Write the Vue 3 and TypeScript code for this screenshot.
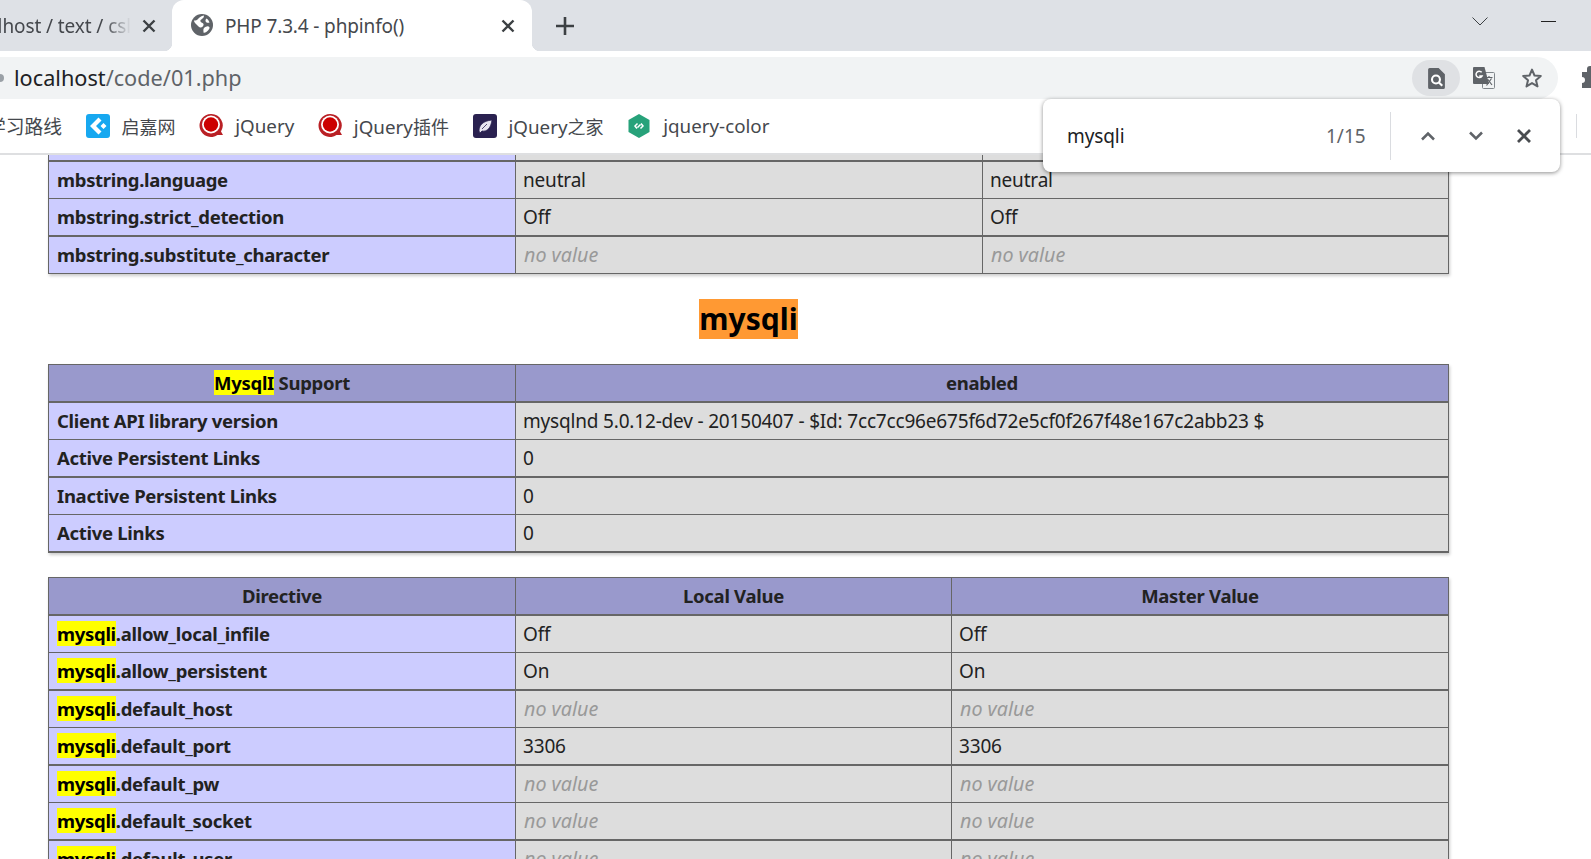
<script setup lang="ts">
interface Row {
  name: string
  mark?: string
  v1: string
  v2?: string
  thick?: boolean
}

const t1: Row[] = [
  { name: 'mbstring.language', v1: 'neutral', v2: 'neutral' },
  { name: 'mbstring.strict_detection', v1: 'Off', v2: 'Off', thick: true },
  { name: 'mbstring.substitute_character', v1: 'no value', v2: 'no value' }
]
const t2: Row[] = [
  { name: 'Client API library version', v1: 'mysqlnd 5.0.12-dev - 20150407 - $Id: 7cc7cc96e675f6d72e5cf0f267f48e167c2abb23 $' },
  { name: 'Active Persistent Links', v1: '0', thick: true },
  { name: 'Inactive Persistent Links', v1: '0' },
  { name: 'Active Links', v1: '0', thick: true }
]
const t3: Row[] = [
  { mark: 'mysqli', name: '.allow_local_infile', v1: 'Off', v2: 'Off' },
  { mark: 'mysqli', name: '.allow_persistent', v1: 'On', v2: 'On', thick: true },
  { mark: 'mysqli', name: '.default_host', v1: 'no value', v2: 'no value' },
  { mark: 'mysqli', name: '.default_port', v1: '3306', v2: '3306', thick: true },
  { mark: 'mysqli', name: '.default_pw', v1: 'no value', v2: 'no value' },
  { mark: 'mysqli', name: '.default_socket', v1: 'no value', v2: 'no value', thick: true },
  { mark: 'mysqli', name: '.default_user', v1: 'no value', v2: 'no value' }
]
</script>

<template>
  <div class="window">
    <div class="tabstrip">
      <div class="tab-inactive">
        <div class="tab-title-clip"><span>localhost / text / csl</span></div>
        <svg class="x" viewBox="0 0 16 16" width="16" height="16"><path d="M2.5 2.5l11 11M13.5 2.5l-11 11" /></svg>
      </div>
      <div class="tab-active">
        <svg class="globe" viewBox="0 0 22 22" width="22" height="22">
          <circle cx="11" cy="11" r="11" fill="#5f6368" />
          <path d="M3 6.5c2 0 3-.5 4-1.5s3-3 6-3.500c0 2-1 2.500-2 3.500S9 6 9.500 7.500s2.500 1 3 2.500-1 3-2.500 3.500S7 12 5.500 10.500 3 8 3 6.500zM13 14c1.500-1 3-2 4.500-1.500s1.500 2-.5 4-3.500 2.500-4.500 2c0-1.500-.5-3.500.5-4.500zM15.500 4.500c1.500 1 2.500 2.500 3 4-1 .5-2.500.5-3.500-.5s-.5-2.500.5-3.500z" fill="#fff" />
        </svg>
        <span class="tab-title">PHP 7.3.4 - phpinfo()</span>
        <svg class="x" viewBox="0 0 16 16" width="16" height="16"><path d="M2.5 2.5l11 11M13.5 2.5l-11 11" /></svg>
      </div>
      <svg class="plus" viewBox="0 0 20 20" width="20" height="20"><path d="M10 1v18M1 10h18" /></svg>
      <div class="spacer"></div>
      <svg class="chev-win" viewBox="0 0 16 9" width="16" height="9"><path d="M.5.5L8 8 15.500.5" /></svg>
      <div class="minimize"></div>
    </div>

    <div class="toolbar">
      <div class="omnibox">
        <span class="dot"></span>
        <span class="url"><b>localhost</b>/code/01.php</span>
        <div class="spacer"></div>
        <div class="pill">
          <svg viewBox="0 0 16 20" width="17" height="21">
            <path d="M1.500 0H10l6 6v12.500a1.500 1.500 0 0 1-1.500 1.500h-13A1.500 1.500 0 0 1 0 18.500v-17A1.500 1.500 0 0 1 1.500 0z" fill="#5f6368" />
            <circle cx="7.500" cy="11" r="3.800" fill="none" stroke="#fff" stroke-width="2" />
            <path d="M10.300 13.800l3.200 3.200" stroke="#fff" stroke-width="2" />
          </svg>
        </div>
        <svg class="translate" viewBox="0 0 22 22" width="22" height="22">
          <rect x="9.500" y="5.500" width="12" height="16" rx="1" fill="#f1f3f4" stroke="#80868b" stroke-width="1" />
          <path d="M1 0h10.500l4.500 17H1a1 1 0 0 1-1-1V1a1 1 0 0 1 1-1z" fill="#5f6368" />
          <path d="M8.700 5.300A3.200 3.200 0 1 0 9 9H6.300" fill="none" stroke="#fff" stroke-width="1.500" />
          <path d="M12.500 10.500h7M16 9v1.500M13.500 18.500l5-7M14.500 12l4.500 6" fill="none" stroke="#5f6368" stroke-width="1.200" />
        </svg>
        <svg class="star" viewBox="0 0 22 22" width="22" height="22">
          <path d="M11 2.600l2.500 5.900 6.300.5-4.800 4.200 1.500 6.200L11 16.100l-5.500 3.300L7 13.200 2.200 9l6.300-.5z" fill="none" stroke="#5f6368" stroke-width="2" stroke-linejoin="round" />
        </svg>
      </div>
      <svg class="puzzle" viewBox="0 0 22 24" width="22" height="24">
        <path d="M2 7h5V4a3 3 0 0 1 6 0v3h5v5h3a3 3 0 0 1 0 6h-3v5H2v-5a3 3 0 0 0 0-6z" fill="#5f6368" />
      </svg>
    </div>

    <div class="bookmarks">
      <div class="bm-clip"><span>学习路线</span></div>
      <div class="bm">
        <svg viewBox="0 0 24 24" width="24" height="24">
          <rect width="24" height="24" rx="3" fill="#17a8f0" />
          <path d="M12.500 3.500l3 3-5.500 5.500 5.500 5.500-3 3L4 12zM17.500 9l3 3-3 3-3-3z" fill="#fff" />
        </svg>
        <span class="cjk">启嘉网</span>
      </div>
      <div class="bm">
        <svg viewBox="0 0 24 24" width="24" height="24">
          <path d="M12 0a11.500 11.500 0 0 1 10 17.500l2 3.500h-5.500A11.500 11.500 0 1 1 12 0z" fill="#b92025" />
          <circle cx="12" cy="10.500" r="9" fill="#fff" />
          <circle cx="12" cy="10.500" r="7.200" fill="#cc0000" />
        </svg>
        <span>jQuery</span>
      </div>
      <div class="bm">
        <svg viewBox="0 0 24 24" width="24" height="24">
          <path d="M12 0a11.500 11.500 0 0 1 10 17.500l2 3.500h-5.500A11.500 11.500 0 1 1 12 0z" fill="#b92025" />
          <circle cx="12" cy="10.500" r="9" fill="#fff" />
          <circle cx="12" cy="10.500" r="7.200" fill="#cc0000" />
        </svg>
        <span>jQuery<span class="cjk">插件</span></span>
      </div>
      <div class="bm">
        <svg viewBox="0 0 24 24" width="24" height="24">
          <rect width="24" height="24" rx="3" fill="#2a2150" />
          <path d="M6 17c0-6 4-10 13-11-1 8-5 12-10 11l-2 2zM9 15l5-5" fill="#e8e6f0" stroke="#2a2150" stroke-width=".8" />
        </svg>
        <span>jQuery<span class="cjk">之家</span></span>
      </div>
      <div class="bm">
        <svg viewBox="0 0 24 24" width="24" height="24">
          <path d="M12 0l10.500 6v12L12 24 1.500 18V6z" fill="#27a27a" />
          <path d="M10.500 9.500L8 12l2 2.500M13.500 14.500L16 12l-2-2.500M10.500 13.500l3-3" fill="none" stroke="#fff" stroke-width="1.500" />
        </svg>
        <span>jquery-color</span>
      </div>
      <div class="spacer"></div>
      <div class="bm-sep"></div>
    </div>

    <div class="page">
      <div class="content">
        <table class="c3">
          <tbody>
            <tr class="partial"><td class="e"></td><td class="v"></td><td class="v"></td></tr>
            <tr v-for="r in t1" :key="r.name" :class="r.thick ? 'thick' : 'thin'">
              <td class="e">{{ r.name }}</td>
              <td class="v" :class="{ nv: r.v1 === 'no value' }">{{ r.v1 }}</td>
              <td class="v" :class="{ nv: r.v2 === 'no value' }">{{ r.v2 }}</td>
            </tr>
          </tbody>
        </table>

        <h2 class="heading"><span class="found">mysqli</span></h2>

        <table class="c2 bordered">
          <tbody>
            <tr class="thick">
              <th class="h"><span class="mark">MysqlI</span> Support</th>
              <th class="h">enabled</th>
            </tr>
            <tr v-for="r in t2" :key="r.name" :class="r.thick ? 'thick' : 'thin'">
              <td class="e">{{ r.name }}</td>
              <td class="v">{{ r.v1 }}</td>
            </tr>
          </tbody>
        </table>

        <table class="c3b bordered">
          <tbody>
            <tr class="thick">
              <th class="h">Directive</th>
              <th class="h">Local Value</th>
              <th class="h">Master Value</th>
            </tr>
            <tr v-for="r in t3" :key="r.name" :class="r.thick ? 'thick' : 'thin'">
              <td class="e"><span class="mark">{{ r.mark }}</span>{{ r.name }}</td>
              <td class="v" :class="{ nv: r.v1 === 'no value' }">{{ r.v1 }}</td>
              <td class="v" :class="{ nv: r.v2 === 'no value' }">{{ r.v2 }}</td>
            </tr>
          </tbody>
        </table>
      </div>
    </div>

    <div class="findbar">
      <span class="find-text">mysqli</span>
      <span class="find-count">1/15</span>
      <div class="find-sep"></div>
      <svg class="fa" viewBox="0 0 16 10" width="16" height="10"><path d="M2 8.500l6-6 6 6" /></svg>
      <svg class="fa" viewBox="0 0 16 10" width="16" height="10"><path d="M2 1.500l6 6 6-6" /></svg>
      <svg class="fa fx" viewBox="0 0 16 16" width="16" height="16"><path d="M2 2l12 12M14 2L2 14" /></svg>
    </div>
  </div>
</template>

<style>
html, body { margin: 0; padding: 0; overflow: hidden; background: #fff; }
</style>

<style scoped>
.window {
  position: relative;
  width: 1591px;
  height: 859px;
  overflow: hidden;
  font-family: "Noto Sans", "Noto Sans CJK SC", sans-serif;
  color: #222;
  display: flex;
  flex-direction: column;
}
.spacer { flex: 1; }

.tabstrip {
  height: 51px;
  background: #dee1e6;
  display: flex;
  align-items: center;
  flex: none;
}
.tab-inactive {
  width: 172px;
  height: 51px;
  flex: none;
  display: flex;
  align-items: center;
  box-sizing: border-box;
}
.tab-title-clip {
  width: 131px;
  flex: none;
  overflow: hidden;
  display: flex;
  justify-content: flex-end;
  white-space: nowrap;
  font-size: 19px;
  letter-spacing: -0.1px;
  color: #45484d;
  -webkit-mask-image: linear-gradient(to right, #000 80%, transparent 100%);
  mask-image: linear-gradient(to right, #000 80%, transparent 100%);
}
.x { fill: none; stroke: #3c4043; stroke-width: 2.4px; flex: none; }
.tab-inactive .x { margin-left: 10px; }
.tab-active {
  position: relative;
  width: 360px;
  height: 51px;
  flex: none;
  background: #fff;
  border-radius: 12px 12px 0 0;
  display: flex;
  align-items: center;
  box-sizing: border-box;
  padding: 0 16px 0 19px;
}
.tab-active::before,
.tab-active::after {
  content: "";
  position: absolute;
  bottom: 0;
  width: 8px;
  height: 8px;
}
.tab-active::before {
  left: -8px;
  background: radial-gradient(circle at 0 0, transparent 8px, #fff 8.5px);
}
.tab-active::after {
  right: -8px;
  background: radial-gradient(circle at 100% 0, transparent 8px, #fff 8.5px);
}
.globe { flex: none; margin-bottom: 1px; }
.tab-title { margin-left: 12px; font-size: 19px; letter-spacing: -0.14px; color: #45484d; flex: 1; white-space: nowrap; }
.plus { fill: none; stroke: #3c4043; stroke-width: 2.6px; margin-left: 23px; flex: none; }
.chev-win { fill: none; stroke: #3c4043; stroke-width: 1px; margin-right: 53px; margin-bottom: 9px; flex: none; }
.minimize { width: 15px; height: 1px; background: #222; margin-right: 35px; margin-bottom: 9px; flex: none; }

.toolbar {
  height: 48px;
  background: #fff;
  display: flex;
  align-items: flex-end;
  flex: none;
}
.omnibox {
  width: 1558px;
  height: 42px;
  background: #f1f3f4;
  border-radius: 0 21px 21px 0;
  display: flex;
  align-items: center;
  flex: none;
  box-sizing: border-box;
}
.dot { width: 4px; height: 8px; border-radius: 0 4px 4px 0; background: #9aa0a6; flex: none; }
.url { font-size: 21.7px; line-height: 30px; color: #5f6368; margin-left: 10px; white-space: nowrap; }
.url b { font-weight: 400; color: #202124; }
.pill {
  width: 48px;
  height: 36px;
  border-radius: 18px;
  background: #dfe1e4;
  display: flex;
  align-items: center;
  justify-content: center;
  flex: none;
}
.translate { margin-left: 13px; flex: none; }
.star { margin-left: 26px; margin-right: 15px; flex: none; }
.puzzle { flex: none; margin-left: 22px; margin-bottom: 10px; }

.bookmarks {
  height: 56px;
  background: #fff;
  display: flex;
  align-items: center;
  flex: none;
  border-bottom: 2px solid #dedfe1;
  box-sizing: border-box;
  font-size: 18.8px;
  color: #45484d;
  white-space: nowrap;
}
.cjk { font-size: 18px; }
.bm-clip {
  width: 62px;
  flex: none;
  overflow: hidden;
  display: flex;
  justify-content: flex-end;
}
.bm { display: flex; align-items: center; gap: 12px; margin-left: 23.6px; flex: none; }
.bm svg { flex: none; }
.bm-sep { width: 1px; height: 24px; background: #dadce0; margin-right: 14px; flex: none; }

.page { flex: 1; min-height: 0; overflow: hidden; background: #fff; }
.content { width: 1401px; margin-left: 48px; }

table {
  border-collapse: separate;
  border-spacing: 0;
  table-layout: fixed;
  width: 1401px;
  box-shadow: 1px 2px 3px #ccc;
  border-left: 1px solid #666;
  font-size: 19px;
}
.bordered { border-top: 1px solid #666; }
.c3 td:nth-child(1) { width: 467px; }
.c3 td:nth-child(2) { width: 467px; }
.c2 th:nth-child(1) { width: 467px; }
.c3b th:nth-child(1) { width: 467px; }
.c3b th:nth-child(2) { width: 436px; }

td, th {
  box-sizing: border-box;
  padding: 0 8px;
  border-right: 1px solid #666;
  border-bottom: 1px solid #666;
  line-height: 24px;
  white-space: nowrap;
  overflow: hidden;
}
.thin td, .thin th { height: 37px; }
.thick td, .thick th { height: 38px; border-bottom-width: 2px; }
.partial td { height: 7px; padding: 0; border-bottom-width: 2px; font-size: 0; line-height: 0; }
.e { background: #ccf; font-weight: 700; color: #222; font-size: 18.5px; letter-spacing: -0.3px; }
.h { background: #99c; font-weight: 700; color: #222; text-align: center; font-size: 18.5px; letter-spacing: -0.3px; }
.v { background: #ddd; color: #222; letter-spacing: -0.18px; padding-left: 7px; }
td.nv { color: #999; font-style: italic; font-size: 19.7px; letter-spacing: 0; padding-left: 8px; }
.mark { background: #ff0; color: #000; }

.heading {
  margin: 25px 0;
  height: 40px;
  line-height: 40px;
  font-size: 30px;
  font-weight: 700;
  text-align: center;
  color: #000;
}
.found { display: inline-block; background: #f93; height: 40px; }
.c3b { margin-top: 24px; }

.findbar {
  position: absolute;
  left: 1043px;
  top: 99px;
  width: 517px;
  height: 73px;
  box-sizing: border-box;
  background: #fff;
  border-radius: 8px;
  box-shadow: 0 1px 4px rgba(0, 0, 0, 0.45);
  display: flex;
  align-items: center;
  padding-left: 24px;
  font-size: 19px;
}
.find-text { color: #202124; width: 259px; flex: none; letter-spacing: -0.1px; }
.find-count { color: #5f6368; width: 38px; flex: none; text-align: right; }
.find-sep { width: 1px; height: 48px; background: #dadce0; margin-left: 26px; margin-right: 29px; flex: none; }
.fa { fill: none; stroke: #5f6368; stroke-width: 2.5px; flex: none; margin-right: 32px; }
.fx { stroke: #494c50; stroke-width: 2.8px; margin-right: 0; }
</style>
